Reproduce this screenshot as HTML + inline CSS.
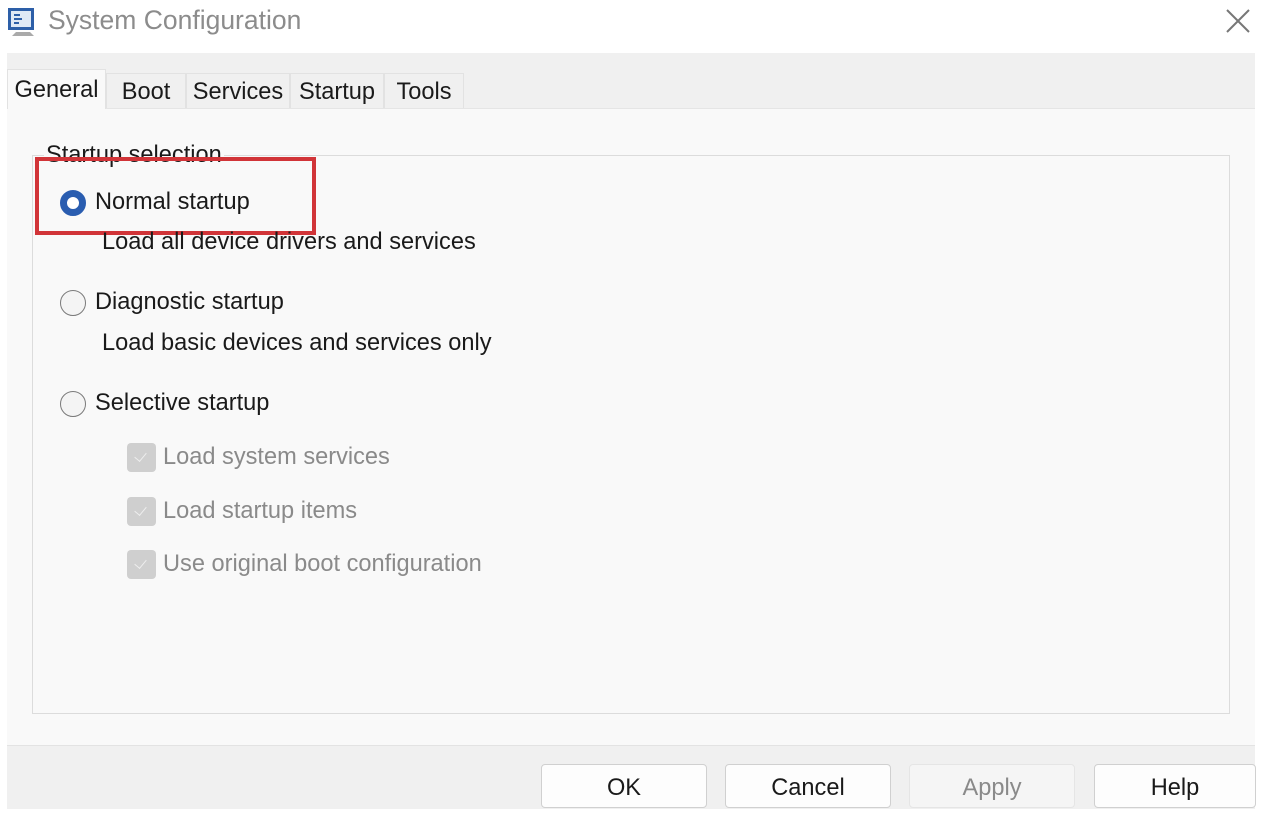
<!DOCTYPE html>
<html><head><style>
body{margin:0;width:1270px;height:816px;background:#fff;font-family:"Liberation Sans",sans-serif;position:relative;overflow:hidden}
.a{position:absolute}
.t{font-size:23.6px;color:#1a1a1a;white-space:nowrap}
.g{color:#8a8a8a}
.tab{position:absolute;top:73px;height:35px;background:#f0f0f0;border:1px solid #e2e2e2;border-bottom:none;font-size:23.6px;color:#1a1a1a;text-align:center;line-height:36px;box-sizing:border-box}
.btn{position:absolute;top:764px;height:44px;width:166px;background:#fdfdfd;border:1px solid #d0d0d0;border-radius:4px;box-sizing:border-box;font-size:23.6px;text-align:center;line-height:46px;color:#1a1a1a}
.rad{position:absolute;width:26px;height:26px;border:1.5px solid #7a7a7a;border-radius:50%;box-sizing:border-box;background:#f4f4f4}
.cb{position:absolute;left:127px;width:29px;height:29px;background:#cfcfcf;border-radius:4px}
.cb:after{content:"";position:absolute;left:10px;top:7px;width:6px;height:10px;border:solid #eee;border-width:0 1.5px 1.5px 0;transform:rotate(40deg)}
</style></head><body>
<svg class="a" style="left:6px;top:6px" width="34" height="32" viewBox="0 0 34 32"><rect x="2" y="2" width="26" height="22" fill="#2d5fa8"/><rect x="5" y="5" width="20" height="16" fill="#dfe9f5"/><path d="M8 9h6M8 13h8M8 17h5" stroke="#2d5fa8" stroke-width="2"/><path d="M10 26h14l4 4H6z" fill="#aaa"/></svg>
<div class="a" style="left:48px;top:5px;font-size:26.5px;color:#8c8c8c">System Configuration</div>
<svg class="a" style="left:1225px;top:8px" width="26" height="26"><path d="M2 2L24 24M24 2L2 24" stroke="#777" stroke-width="2"/></svg>
<div class="a" style="left:7px;top:53px;width:1248px;height:55px;background:#f0f0f0"></div>
<div class="tab" style="left:7px;top:69px;width:99px;height:40px;background:#f9f9f9;z-index:2;line-height:40px">General</div>
<div class="tab" style="left:106px;width:80px">Boot</div>
<div class="tab" style="left:186px;width:104px">Services</div>
<div class="tab" style="left:290px;width:94px">Startup</div>
<div class="tab" style="left:384px;width:80px">Tools</div>
<div class="a" style="left:7px;top:108px;width:1248px;height:637px;background:#f9f9f9;border-top:1px solid #e5e5e5"></div>
<div class="a" style="left:32px;top:155px;width:1198px;height:559px;border:1px solid #dcdcdc;box-sizing:border-box"></div>
<div class="a t" style="left:44px;top:142px;background:#f9f9f9;padding:0 2px">Startup selection</div>
<div class="a" style="left:35px;top:157px;width:281px;height:78px;border:4px solid #d13438;box-sizing:border-box"></div>
<div class="rad" style="left:60px;top:190px;border:7px solid #2a5db0;background:#fff"></div>
<div class="a t" style="left:95px;top:189px">Normal startup</div>
<div class="a t" style="left:102px;top:229px">Load all device drivers and services</div>
<div class="rad" style="left:60px;top:290px"></div>
<div class="a t" style="left:95px;top:289px">Diagnostic startup</div>
<div class="a t" style="left:102px;top:330px">Load basic devices and services only</div>
<div class="rad" style="left:60px;top:391px"></div>
<div class="a t" style="left:95px;top:390px">Selective startup</div>
<div class="cb" style="top:443px"></div><div class="a t g" style="left:163px;top:444px">Load system services</div>
<div class="cb" style="top:497px"></div><div class="a t g" style="left:163px;top:498px">Load startup items</div>
<div class="cb" style="top:550px"></div><div class="a t g" style="left:163px;top:551px">Use original boot configuration</div>
<div class="a" style="left:7px;top:745px;width:1248px;height:63px;background:#f0f0f0;border-top:1px solid #e3e3e3"></div>
<div class="btn" style="left:541px">OK</div>
<div class="btn" style="left:725px">Cancel</div>
<div class="btn" style="left:909px;background:#f5f5f5;border-color:#e5e5e5;color:#8a8a8a">Apply</div>
<div class="btn" style="left:1094px;width:162px">Help</div>
</body></html>
